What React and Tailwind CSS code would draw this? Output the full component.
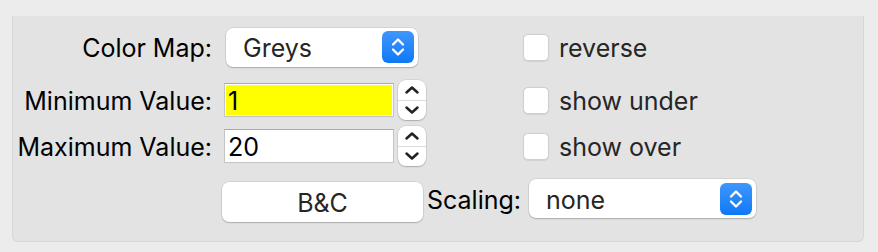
import React from "react";

const font = { fontFamily: "Inter, 'Helvetica Neue', Arial, sans-serif" };

function BlueStepper() {
  return (
    <div className="w-[32px] h-[32px] rounded-[6px] bg-gradient-to-b from-[#3d97fb] to-[#0a78f6] flex items-center justify-center">
      <svg width="16" height="22" viewBox="0 0 16 22" fill="none" stroke="white" strokeWidth="2.3" strokeLinecap="round" strokeLinejoin="round">
        <path d="M3 8.5 L8 3.5 L13 8.5" />
        <path d="M3 13.5 L8 18.5 L13 13.5" />
      </svg>
    </div>
  );
}

function Select({ w, value }) {
  return (
    <div
      className={`${w} h-[39px] bg-white rounded-[7px] shadow-[0_0_0_0.5px_rgba(0,0,0,0.12),0_1px_1.5px_rgba(0,0,0,0.2)] flex items-center justify-between pl-[17px] pr-[4px]`}
    >
      <span className="pt-[4px] text-[25px] text-[#262626]">{value}</span>
      <BlueStepper />
    </div>
  );
}

function Stepper() {
  return (
    <div className="w-[28px] h-[40px] bg-white rounded-[8px] shadow-[0_0_0_0.5px_rgba(0,0,0,0.12),0_1px_1.5px_rgba(0,0,0,0.2)] flex flex-col">
      <div className="flex-1 flex items-center justify-center border-b border-[#dcdcdc]">
        <svg width="16" height="10" viewBox="0 0 16 10" fill="none" stroke="#222" strokeWidth="2.5" strokeLinecap="round" strokeLinejoin="round">
          <path d="M2.5 7.5 L8 2.5 L13.5 7.5" />
        </svg>
      </div>
      <div className="flex-1 flex items-center justify-center">
        <svg width="16" height="10" viewBox="0 0 16 10" fill="none" stroke="#222" strokeWidth="2.5" strokeLinecap="round" strokeLinejoin="round">
          <path d="M2.5 2.5 L8 7.5 L13.5 2.5" />
        </svg>
      </div>
    </div>
  );
}

function Input({ value, yellow }) {
  return (
    <div className="w-[170px] h-[34px] border border-[#c4c4c4] border-t-[#a9a9a9] bg-white p-[1px]">
      <div className={`w-full h-full ${yellow ? "bg-[#ffff00]" : "bg-white"} flex items-center pl-[2px] pt-[3px] text-[25px] text-black leading-none`}>
        {value}
      </div>
    </div>
  );
}

function Check({ label }) {
  return (
    <div className="flex items-center">
      <div className="w-[26px] h-[27px] bg-white rounded-[5px] border border-[#cfcfcf] shadow-[0_0.5px_1px_rgba(0,0,0,0.08)]" />
      <span className="ml-[10px] pt-[4px] text-[25px] text-[#262626]">{label}</span>
    </div>
  );
}

export default function App() {
  return (
    <div className="w-[878px] h-[252px] bg-[#ececec] pt-[16px] pl-[12px]" style={font}>
      <div className="w-[852px] h-[226px] bg-[#e3e3e3] border-l border-r border-b border-[#d6d6d6] rounded-b-[6px] pt-[11px] flex flex-col">
        {/* Row 1 */}
        <div className="h-[40px] flex items-center">
          <div className="w-[199px] pt-[4px] text-right text-[25px] text-black whitespace-nowrap">Color Map:</div>
          <div className="ml-[14px]">
            <Select w="w-[192px]" value="Greys" />
          </div>
          <div className="ml-[105px]">
            <Check label="reverse" />
          </div>
        </div>
        {/* Row 2 */}
        <div className="mt-[13px] h-[40px] flex items-center">
          <div className="w-[199px] pt-[4px] text-right text-[25px] text-black whitespace-nowrap">Minimum Value:</div>
          <div className="ml-[12px]">
            <Input value="1" yellow />
          </div>
          <div className="ml-[4px]">
            <Stepper />
          </div>
          <div className="ml-[97px]">
            <Check label="show under" />
          </div>
        </div>
        {/* Row 3 */}
        <div className="mt-[6px] h-[40px] flex items-center">
          <div className="w-[199px] pt-[4px] text-right text-[25px] text-black whitespace-nowrap">Maximum Value:</div>
          <div className="ml-[12px]">
            <Input value="20" />
          </div>
          <div className="ml-[4px]">
            <Stepper />
          </div>
          <div className="ml-[97px]">
            <Check label="show over" />
          </div>
        </div>
        {/* Row 4 */}
        <div className="mt-[13px] flex items-start">
          <div className="ml-[209px] mt-[3px] w-[201px] h-[40px] pt-[4px] bg-white rounded-[7px] shadow-[0_0_0_0.5px_rgba(0,0,0,0.12),0_1px_1.5px_rgba(0,0,0,0.2)] flex items-center justify-center text-[25px] text-[#262626]">
            B&amp;C
          </div>
          <div className="ml-[4px] h-[39px] pt-[4px] flex items-center text-[25px] text-black whitespace-nowrap">Scaling:</div>
          <div className="ml-[8px]">
            <Select w="w-[227px]" value="none" />
          </div>
        </div>
      </div>
    </div>
  );
}
